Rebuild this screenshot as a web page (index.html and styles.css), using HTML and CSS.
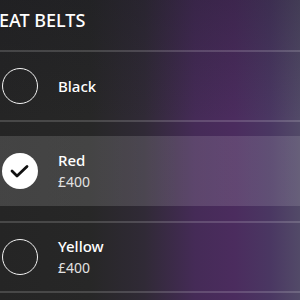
FILE: index.html
```html
<!DOCTYPE html>
<html lang="en">
<head>
    <meta charset="UTF-8">
    <meta name="viewport" content="width=device-width, initial-scale=1.0">
    <title>Seat Belts</title>
    <link rel="stylesheet" href="styles.css">
</head>
<body>
    <div class="panel">
        <h2 class="title">SEAT BELTS</h2>
        <ul class="options">
            <li class="option">
                <div class="option-body">
                    <span class="radio"></span>
                    <div class="label">
                        <div class="name">Black</div>
                    </div>
                </div>
            </li>
            <li class="option selected">
                <div class="option-body">
                    <span class="radio">
                        <svg width="36" height="36" viewBox="0 0 36 36">
                            <path d="M10 18 L15 23 L25 13.5" fill="none" stroke="#111" stroke-width="2.8" stroke-linecap="round" stroke-linejoin="round"/>
                        </svg>
                    </span>
                    <div class="label">
                        <div class="name">Red</div>
                        <div class="price">£400</div>
                    </div>
                </div>
            </li>
            <li class="option">
                <div class="option-body">
                    <span class="radio"></span>
                    <div class="label">
                        <div class="name">Yellow</div>
                        <div class="price">£400</div>
                    </div>
                </div>
            </li>
        </ul>
    </div>
</body>
</html>
```

FILE: styles.css
```css
html, body {
    margin: 0;
    height: 300px;
    overflow: hidden;
}
body {
    font-family: "Noto Sans", sans-serif;
    color: #fff;
    background:
        linear-gradient(to bottom, rgba(20, 20, 30, 0.25), rgba(20, 20, 30, 0) 40%),
        linear-gradient(to right, #252525 0%, #272727 30%, #302a36 48%, #452b57 65%, #4b2c5e 78%, #4a3762 90%, #524a68 100%);
}
.panel {
    width: 300px;
}
.title {
    margin: 0;
    height: 50px;
    box-sizing: border-box;
    padding-top: 8px;
    font-size: 18px;
    line-height: 24px;
    font-weight: 500;
    text-indent: -11px;
    white-space: nowrap;
}
.options {
    list-style: none;
    margin: 0;
    padding: 0;
}
.option {
    border-top: 2px solid rgba(255, 255, 255, 0.16);
}
.option:last-child {
    border-bottom: 2px solid rgba(255, 255, 255, 0.16);
}
.option-body {
    display: flex;
    align-items: center;
    height: 68px;
}
.selected {
    padding: 14px 0 15px;
}
.selected .option-body {
    height: 70px;
    background: linear-gradient(to right, rgba(255, 255, 255, 0.14), rgba(255, 255, 255, 0.12));
}
.radio {
    flex: none;
    width: 36px;
    height: 36px;
    box-sizing: border-box;
    margin-left: 2px;
    border: 1.5px solid #f2f2f2;
    border-radius: 50%;
}
.selected .radio {
    background: #fff;
    border: none;
}
.radio svg {
    display: block;
}
.label {
    margin-left: 20px;
    line-height: 21px;
}
.name {
    font-size: 15px;
    font-weight: 500;
}
.price {
    font-size: 14px;
    color: #e2e2e2;
}
```
